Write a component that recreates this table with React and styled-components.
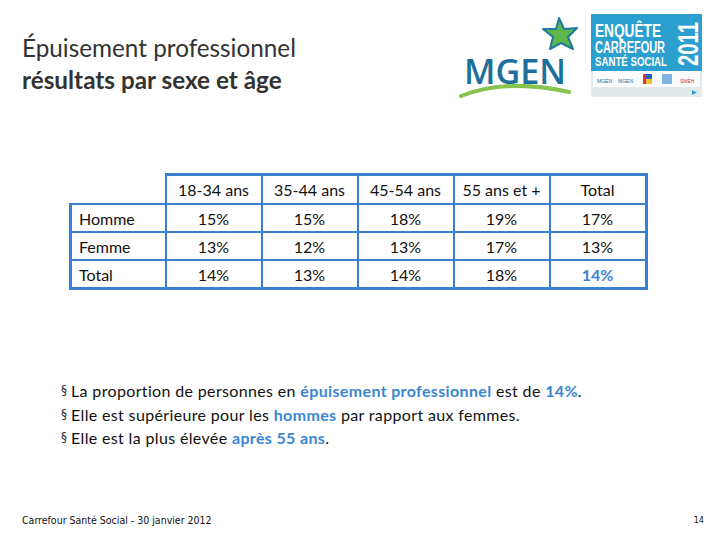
import React from 'react';
import styled, { createGlobalStyle } from 'styled-components';

const Global = createGlobalStyle`
  html, body { margin: 0; padding: 0; background: #fff; }
  body { font-family: Lato, "Open Sans", sans-serif; color: #1a1a1a; }
`

const Page = styled.div`
  width: 720px;
  height: 540px;
  display: flex;
  flex-direction: column;
  overflow: hidden;
`
const Header = styled.div`
  display: flex;
  justify-content: space-between;
  align-items: flex-start;
  height: 110px;
`
const Title = styled.div`
  padding: 32px 0 0 22px;
  font-size: 24.3px;
  line-height: 32px;
  color: #333;
`
const Strong = styled.div`
  font-weight: 700;
`
const Logos = styled.div`
  display: flex;
  align-items: flex-start;
  gap: 10px;
  padding: 14px 18px 0 0;
`
const TableWrap = styled.div`
  padding: 63px 0 0 69px;
`
const Grid = styled.table`
  border-collapse: collapse;
  font-size: 16px;
  color: #111;
`
const Head = styled.th`
  width: 94px;
  height: 27px;
  padding: 0;
  font-weight: 400;
  text-align: center;
  border: 2px solid #3b7fcf;
  border-top-width: 3px;
  &:last-child { border-right-width: 3px; }
  &:first-child { border: none; }
`
const Label = styled.td`
  height: 26px;
  padding: 0 0 0 7px;
  text-align: left;
  border: 2px solid #3b7fcf;
  border-left-width: 3px;
`
const Cell = styled.td`
  height: 26px;
  padding: 0;
  text-align: center;
  border: 2px solid #3b7fcf;
  font-weight: ${p => (p.$hi ? 700 : 400)};
  color: ${p => (p.$hi ? '#3a86d2' : 'inherit')};
  &:last-child { border-right-width: 3px; }
`
const Row = styled.tr`
  &:last-child td { border-bottom-width: 3px; }
`
const Points = styled.ul`
  list-style: none;
  margin: 0;
  padding: 89px 0 0 61px;
  font-size: 16px;
  letter-spacing: 0.35px;
  line-height: 23.5px;
  color: #111;
`
const Point = styled.li`
  display: flex;
  align-items: center;
`
const Mark = styled.span`
  width: 10px;
  font-size: 12px;
  color: #333;
  font-family: "DejaVu Sans", sans-serif;
`
const Hi = styled.span`
  color: #3a86d2;
  font-weight: 700;
`
const Footer = styled.div`
  margin-top: auto;
  display: flex;
  justify-content: space-between;
  align-items: center;
  padding: 0 16px 14px 22px;
  font-family: "Liberation Sans Narrow", "DejaVu Sans Condensed", sans-serif;
  font-size: 10.5px;
  color: #111;
`
const PageNo = styled.span`
  font-size: 9px;
`

const MgenLogo = () => (
  <svg width="124" height="86" viewBox="0 0 124 86">
    <polygon
      points="102,4 107,15 120,14 111,23 116,35 104,29 93,35 96,23 86,15 99,15"
      fill="#5cb84a" stroke="#1f7a9e" strokeWidth="2" strokeLinejoin="round"
    />
    <text x="7" y="70" fontFamily="Open Sans, sans-serif" fontWeight="600" fontSize="35" fill="#1d6f9c" textLength="102" lengthAdjust="spacingAndGlyphs">MGEN</text>
    <path d="M4 82 Q 50 64 112 78" stroke="#86c34f" strokeWidth="4" fill="none" strokeLinecap="round" />
  </svg>
)

const Banner = () => (
  <svg width="111" height="83" viewBox="0 0 111 83">
    <rect x="0" y="0" width="111" height="83" fill="#e3e8eb" />
    <rect x="0" y="0" width="111" height="57" fill="#2b9fce" />
    <text x="4" y="23" fontFamily="Liberation Sans, sans-serif" fontWeight="700" fontSize="19" fill="#fff" textLength="66" lengthAdjust="spacingAndGlyphs">ENQUÊTE</text>
    <text x="4" y="39" fontFamily="Liberation Sans, sans-serif" fontWeight="700" fontSize="16" fill="#fff" textLength="70" lengthAdjust="spacingAndGlyphs">CARREFOUR</text>
    <text x="4" y="52" fontFamily="Liberation Sans, sans-serif" fontWeight="700" fontSize="13" fill="#fff" textLength="72" lengthAdjust="spacingAndGlyphs">SANTÉ SOCIAL</text>
    <text transform="translate(107 52) rotate(-90)" fontFamily="Liberation Sans, sans-serif" fontWeight="700" fontSize="30" fill="#fff" textLength="44" lengthAdjust="spacingAndGlyphs">2011</text>
    <rect x="2" y="57" width="107" height="16" fill="#fbfbfb" />
    <text x="6" y="69" fontFamily="Liberation Sans, sans-serif" fontSize="5" fill="#1d6f9c">MGEN</text>
    <text x="27" y="69" fontFamily="Liberation Sans, sans-serif" fontSize="5" fill="#1d6f9c">MGEN</text>
    <rect x="52" y="60" width="9" height="10" fill="#d33" />
    <rect x="55" y="60" width="6" height="5" fill="#2a5fc0" />
    <rect x="55" y="65" width="6" height="5" fill="#f1c232" />
    <rect x="71" y="60" width="10" height="10" fill="#7fb3e0" />
    <text x="89" y="69" fontFamily="Liberation Sans, sans-serif" fontSize="5" fill="#c0392b">SMEH</text>
    <polygon points="101,76 101,81 106,78.5" fill="#2b9fce" />
  </svg>
)

const ages = ['18-34 ans', '35-44 ans', '45-54 ans', '55 ans et +', 'Total']
const rows = [
  { label: 'Homme', values: ['15%', '15%', '18%', '19%', '17%'] },
  { label: 'Femme', values: ['13%', '12%', '13%', '17%', '13%'] },
  { label: 'Total', values: ['14%', '13%', '14%', '18%', '14%'], hiLast: true },
]

export default function App() {
  return (
    <Page>
      <Global />
      <Header>
        <Title>
          <div>Épuisement professionnel</div>
          <Strong>résultats par sexe et âge</Strong>
        </Title>
        <Logos>
          <MgenLogo />
          <Banner />
        </Logos>
      </Header>
      <TableWrap>
        <Grid>
          <thead>
            <tr>
              <Head />
              {ages.map(a => <Head key={a}>{a}</Head>)}
            </tr>
          </thead>
          <tbody>
            {rows.map(r => (
              <Row key={r.label}>
                <Label>{r.label}</Label>
                {r.values.map((v, i) => (
                  <Cell key={i} $hi={r.hiLast && i === r.values.length - 1}>{v}</Cell>
                ))}
              </Row>
            ))}
          </tbody>
        </Grid>
      </TableWrap>
      <Points>
        <Point><Mark>§</Mark>La proportion de personnes en&nbsp;<Hi>épuisement professionnel</Hi>&nbsp;est de&nbsp;<Hi>14%</Hi>.</Point>
        <Point><Mark>§</Mark>Elle est supérieure pour les&nbsp;<Hi>hommes</Hi>&nbsp;par rapport aux femmes.</Point>
        <Point><Mark>§</Mark>Elle est la plus élevée&nbsp;<Hi>après 55 ans</Hi>.</Point>
      </Points>
      <Footer>
        <span>Carrefour Santé Social - 30 janvier 2012</span>
        <PageNo>14</PageNo>
      </Footer>
    </Page>
  );
}
